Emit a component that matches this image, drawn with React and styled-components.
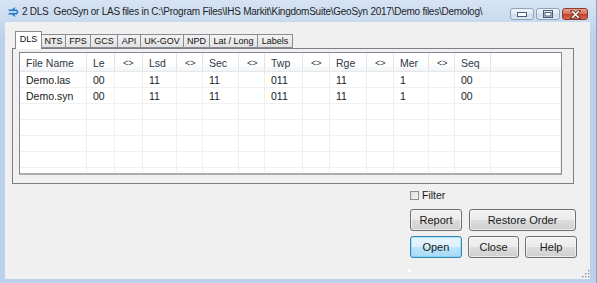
import React from "react";
import styled, { createGlobalStyle } from "styled-components";

const GlobalStyle = createGlobalStyle`
  html, body {
    margin: 0;
    padding: 0;
    background: #ffffff;
  }
  body {
    font-family: "Liberation Sans", Arial, sans-serif;
  }
`;

const tabs = [
  { label: "DLS", w: 27, active: true },
  { label: "NTS", w: 25 },
  { label: "FPS", w: 26 },
  { label: "GCS", w: 28 },
  { label: "API", w: 24 },
  { label: "UK-GOV", w: 44 },
  { label: "NPD", w: 27 },
  { label: "Lat / Long", w: 49 },
  { label: "Labels", w: 36 },
];

const columns = [
  "File Name", "Le", "<>", "Lsd", "<>", "Sec", "<>", "Twp",
  "<>", "Rge", "<>", "Mer", "<>", "Seq", "",
];
const colTemplate = "67px 28px 28px 34px 26px 36px 26px 38px 27px 37px 27px 35px 26px 36px 1fr";

const rows = [
  ["Demo.las", "00", "", "11", "", "11", "", "011", "", "11", "", "1", "", "00", ""],
  ["Demo.syn", "00", "", "11", "", "11", "", "011", "", "11", "", "1", "", "00", ""],
  [], [], [], [], [],
];

const DlsDialog = () => {
  return (
    <Window>
      <TitleBar>
        <AppIcon viewBox="0 0 12 12">
          <path d="M1 3.5 L5 3.5 L7 1.5 L8.5 1.5 L7.2 3.5 L10 3.5 L11.5 6 L10 8.5 L7.2 8.5 L8.5 10.5 L7 10.5 L5 8.5 L1 8.5 L3 6 Z" fill="#2a78c8" />
          <path d="M2.5 5.2 L9.5 5.2 L9.5 6.8 L2.5 6.8 Z" fill="#d9ecff" />
        </AppIcon>
        <Title>2 DLS&nbsp; GeoSyn or LAS files in C:\Program Files\IHS Markit\KingdomSuite\GeoSyn 2017\Demo files\Demolog\</Title>
        <Caption>
          <CapButton>
            <svg width="10" height="5" viewBox="0 0 10 5">
              <rect x="0.5" y="0.5" width="9" height="4" fill="#ffffff" stroke="#4a5d78" />
            </svg>
          </CapButton>
          <CapButton>
            <svg width="10" height="8" viewBox="0 0 10 8">
              <rect x="0.5" y="0.5" width="9" height="7" fill="none" stroke="#4a5d78" />
              <rect x="2" y="2.5" width="6" height="3.5" fill="#ffffff" stroke="#4a5d78" strokeWidth="1" />
            </svg>
          </CapButton>
          <CapButton $close>
            <svg width="11" height="9" viewBox="0 0 11 9">
              <path d="M2 1 L9 8 M9 1 L2 8" stroke="#5a2a22" strokeWidth="3" strokeLinecap="square" />
              <path d="M2 1 L9 8 M9 1 L2 8" stroke="#ffffff" strokeWidth="1.6" />
            </svg>
          </CapButton>
        </Caption>
      </TitleBar>

      <Body>
        <TabStrip>
          {tabs.map((t) => (
            <Tab key={t.label} $w={t.w} $active={t.active}>
              {t.label}
            </Tab>
          ))}
        </TabStrip>
        <Panel>
          <List>
            <HeaderRow>
              {columns.map((c, i) => (
                <HeadCell key={i} $small={c === "<>"}>{c}</HeadCell>
              ))}
            </HeaderRow>
            {rows.map((r, ri) => (
              <Row key={ri}>
                {columns.map((_, ci) => (
                  <Cell key={ci}>{r[ci] || ""}</Cell>
                ))}
              </Row>
            ))}
          </List>
        </Panel>

        <Controls>
          <FilterRow>
            <Check />
            <span>Filter</span>
          </FilterRow>
          <ButtonRow>
            <Button $w={52}>Report</Button>
            <Button $w={107}>Restore Order</Button>
          </ButtonRow>
          <ButtonRow>
            <Button $w={52} $focus>Open</Button>
            <Button $w={52}>Close</Button>
            <Button $w={52}>Help</Button>
          </ButtonRow>
          <Dot />
        </Controls>
        <Grip viewBox="0 0 11 11">
          {[[9, 2], [9, 5], [6, 5], [9, 8], [6, 8], [3, 8]].map(([x, y], i) => (
            <g key={i}>
              <rect x={x + 1} y={y + 1} width="1.5" height="1.5" fill="#ffffff" />
              <rect x={x} y={y} width="1.5" height="1.5" fill="#8d96a3" />
            </g>
          ))}
        </Grip>
      </Body>
    </Window>
  );
};

export default function App() {
  return (
    <>
      <GlobalStyle />
      <DlsDialog />
    </>
  );
}

const Window = styled.div`
  width: 597px;
  height: 283px;
  box-sizing: border-box;
  display: flex;
  flex-direction: column;
  background: linear-gradient(to bottom, #d6e4f4 0px, #c8daef 22px, #b9d1ea 40px);
  border-right: 1px solid #8ca4c2;
  position: relative;
  overflow: hidden;
`;

const TitleBar = styled.div`
  height: 22px;
  display: flex;
  align-items: center;
  padding: 0 8px 0 7px;
  flex-shrink: 0;
`;

const AppIcon = styled.svg`
  width: 12px;
  height: 12px;
  margin-top: 2px;
  flex-shrink: 0;
`;

const Title = styled.div`
  margin-left: 3px;
  margin-top: 1px;
  font-family: "Liberation Sans", Arial, sans-serif;
  font-size: 10px;
  letter-spacing: -0.25px;
  color: #1e1e1e;
  white-space: nowrap;
  flex: 1;
  overflow: hidden;
`;

const Caption = styled.div`
  display: flex;
  gap: 2px;
  margin-top: 3px;
  align-self: flex-start;
  padding-top: 5px;
`;

const CapButton = styled.div`
  width: ${(p) => (p.$close ? 26 : 24)}px;
  height: 12px;
  box-sizing: border-box;
  border: 1px solid ${(p) => (p.$close ? "#8c3a2c" : "#8fa2ba")};
  border-radius: 3px;
  background: ${(p) =>
    p.$close
      ? "linear-gradient(to bottom, #e8a595 0%, #d5705c 45%, #c2412a 55%, #d66a50 100%)"
      : "linear-gradient(to bottom, #f1f5fa 0%, #e0e9f3 45%, #d0dcea 55%, #dde7f2 100%)"};
  display: flex;
  align-items: center;
  justify-content: center;
`;

const Body = styled.div`
  flex: 1;
  margin: 0 6px 4px 5px;
  background: #f0f0f0;
  padding: 9px 13px 0 7px;
  display: flex;
  flex-direction: column;
  position: relative;
`;

const TabStrip = styled.div`
  display: flex;
  align-items: flex-end;
  height: 17px;
  padding-left: 3px;
  position: relative;
  z-index: 2;
`;

const Tab = styled.div`
  width: ${(p) => p.$w}px;
  height: ${(p) => (p.$active ? 18 : 14)}px;
  margin-bottom: ${(p) => (p.$active ? -1 : 0)}px;
  margin-left: -1px;
  &:first-child {
    margin-left: 0;
  }
  box-sizing: border-box;
  border: 1px solid #898c95;
  border-bottom: ${(p) => (p.$active ? "none" : "1px solid #898c95")};
  background: ${(p) =>
    p.$active ? "#ffffff" : "linear-gradient(to bottom, #f3f3f3, #e2e2e2)"};
  position: relative;
  z-index: ${(p) => (p.$active ? 2 : 1)};
  font-family: "Liberation Sans", Arial, sans-serif;
  font-size: 9px;
  color: #111;
  display: flex;
  align-items: center;
  justify-content: center;
  padding-bottom: ${(p) => (p.$active ? 3 : 0)}px;
  white-space: nowrap;
  overflow: hidden;
`;

const Panel = styled.div`
  height: 136px;
  margin-right: 3px;
  box-sizing: border-box;
  border: 1px solid #7a7d84;
  background: #f0f0f0;
  padding: 3px 11px 0 6px;
  flex-shrink: 0;
`;

const List = styled.div`
  height: 123px;
  box-sizing: border-box;
  border: 1px solid #828790;
  border-bottom: 2px solid #a9abb0;
  background: #ffffff;
  overflow: hidden;
`;

const HeaderRow = styled.div`
  display: grid;
  grid-template-columns: ${colTemplate};
  height: 19px;
  background: linear-gradient(to bottom, #ffffff 0%, #ffffff 55%, #f3f4f6 100%);
  border-bottom: 1px solid #e6e7e9;
  box-sizing: border-box;
`;

const HeadCell = styled.div`
  border-right: 1px solid #e3e4e6;
  font-size: ${(p) => (p.$small ? 9 : 10.5)}px;
  color: #2e3846;
  padding-left: ${(p) => (p.$small ? 8 : 6)}px;
  display: flex;
  align-items: center;
  padding-top: 2px;
  white-space: nowrap;
  overflow: hidden;
  &:last-child {
    border-right: none;
  }
`;

const Row = styled.div`
  display: grid;
  grid-template-columns: ${colTemplate};
  height: 16px;
  box-sizing: border-box;
  border-bottom: 1px solid #f0f0f0;
`;

const Cell = styled.div`
  border-right: 1px solid #f0f0f0;
  font-size: 10.5px;
  color: #1a1a1a;
  padding-left: 6px;
  display: flex;
  align-items: center;
  padding-top: 1px;
  white-space: nowrap;
  overflow: hidden;
`;

const Controls = styled.div`
  align-self: flex-end;
  width: 167px;
  display: flex;
  flex-direction: column;
  margin-top: 6px;
`;

const FilterRow = styled.div`
  display: flex;
  align-items: center;
  gap: 3px;
  height: 10px;
  font-size: 10.5px;
  color: #1a1a1a;
`;

const Check = styled.div`
  width: 9px;
  height: 9px;
  box-sizing: border-box;
  border: 1px solid #8f8f8f;
  background: linear-gradient(135deg, #dcdcdc, #f6f6f6);
`;

const ButtonRow = styled.div`
  display: flex;
  gap: 7px;
  margin-top: 5px;
  &:nth-child(2) {
    margin-top: 9px;
  }
  &:nth-child(3) {
    gap: 6px;
  }
`;

const Button = styled.div`
  width: ${(p) => p.$w}px;
  height: 22px;
  box-sizing: border-box;
  border: 1px solid ${(p) => (p.$focus ? "#3c7fb1" : "#707070")};
  border-radius: 3px;
  background: ${(p) =>
    p.$focus
      ? "linear-gradient(to bottom, #eaf6fd 0%, #d9f0fc 50%, #bee6fd 50%, #a7d9f5 100%)"
      : "linear-gradient(to bottom, #f2f2f2 0%, #ebebeb 50%, #dddddd 50%, #cfcfcf 100%)"};
  box-shadow: inset 0 0 0 1px ${(p) => (p.$focus ? "#48d2fd66" : "#fcfcfc99")};
  font-size: 11px;
  color: #1a1a1a;
  display: flex;
  align-items: center;
  justify-content: center;
  white-space: nowrap;
`;

const Dot = styled.div`
  width: 3px;
  height: 3px;
  background: #ffffff;
  margin: 11px 0 0 -2px;
`;

const Grip = styled.svg`
  position: absolute;
  right: 0;
  bottom: 0;
  width: 11px;
  height: 11px;
`;
